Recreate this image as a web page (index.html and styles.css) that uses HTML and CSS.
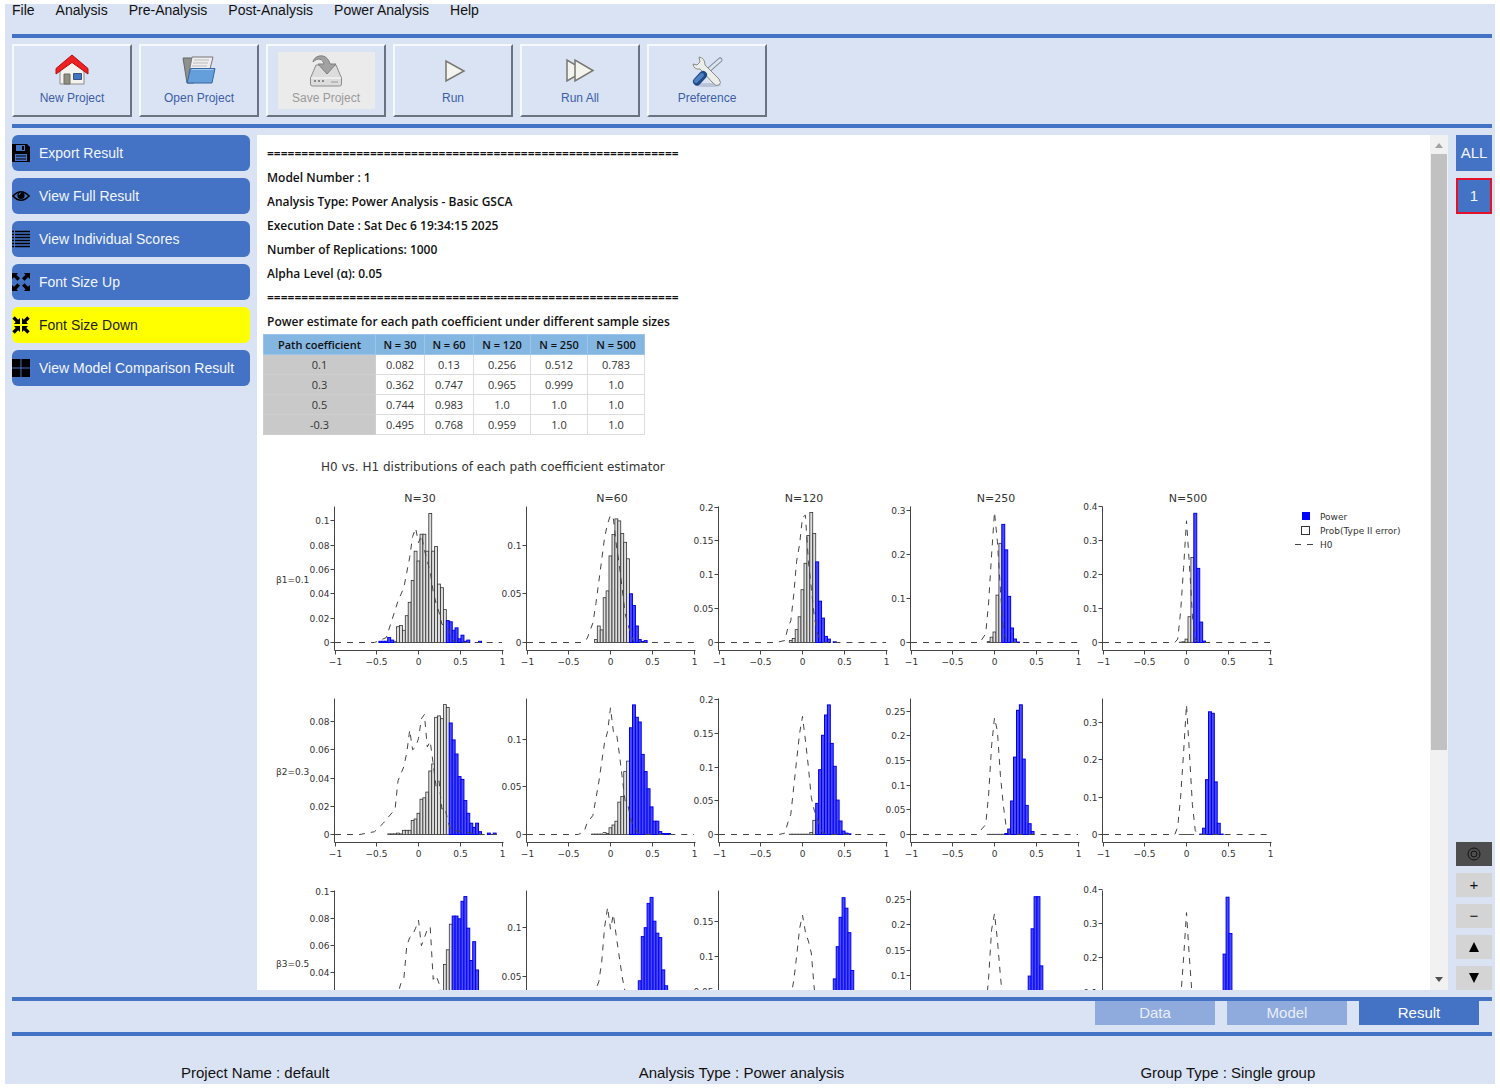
FILE: index.html
```html
<!DOCTYPE html>
<html lang="en">
<head>
<meta charset="utf-8">
<title>Power Analysis - Result</title>
<link rel="stylesheet" href="styles.css">
</head>
<body>
<div class="app">
  <nav class="menu">
    <a href="#">File</a><a href="#">Analysis</a><a href="#">Pre-Analysis</a><a href="#">Post-Analysis</a><a href="#">Power Analysis</a><a href="#">Help</a>
  </nav>

  <div class="toolbar">
    <button class="tool" type="button">
      <svg width="34" height="34" viewBox="0 0 34 34"><path d="M5 17v13h24V17L17 6z" fill="#f4f3ef" stroke="#8b8b86"/><path d="M9 20h6v10H9z" fill="#8f8f82" stroke="#6d6d62"/><path d="M18.500 19.500h8v6h-8z" fill="#3f76c4" stroke="#3a5078"/><path d="M17 1 1 14.500V20L17 8.500 33 20v-5.500z" fill="#e22" stroke="#b01010"/></svg>
      New Project
    </button>
    <button class="tool" type="button">
      <svg width="34" height="34" viewBox="0 0 34 34"><path d="M1 4h10l1 2v23H5z" fill="#8f918d" stroke="#666"/><path d="M10 3h21l-4 16H7z" fill="#eee" stroke="#777"/><path d="M12 6h15M11 9h15M10 12h15" stroke="#bbb" fill="none"/><path d="M8.500 14.500h24.500l-3 14.500H5z" fill="#659fdb" stroke="#3465a4"/><path d="M9.500 15.500h22" stroke="#a5caf0"/></svg>
      Open Project
    </button>
    <button class="tool" type="button" disabled>
      <span class="tool-face">
        <svg width="34" height="34" viewBox="0 0 34 34"><path d="M7 11h20l5.500 13v6q0 2-2 2h-27q-2 0-2-2v-6z" fill="#dcdcdc" stroke="#8c8c8c"/><path d="M2 24h30" stroke="#fff"/><path d="M5 27h2m2 0h2m2 0h2" stroke="#888" stroke-width="2"/><path d="M22 28h7" stroke="#999"/><path d="M4 8C5 1 18-2 21 10h6l-9 10-9-10h6C14 5 9 3 4 8z" fill="#a2a2a2" stroke="#7f7f7f"/></svg>
        Save Project
      </span>
    </button>
    <button class="tool" type="button">
      <svg width="34" height="34" viewBox="0 0 34 34"><path d="M10 7v20l18-10z" fill="#f4f4ef" stroke="#77776f" stroke-width="1.500"/></svg>
      Run
    </button>
    <button class="tool" type="button">
      <svg width="34" height="34" viewBox="0 0 34 34"><path d="M4 6v21l18-10.500z" fill="#f4f4ef" stroke="#77776f" stroke-width="1.500"/><path d="M12 6v21l18-10.500z" fill="#f4f4ef" stroke="#77776f" stroke-width="1.500"/></svg>
      Run All
    </button>
    <button class="tool" type="button">
      <svg width="34" height="34" viewBox="0 0 34 34"><ellipse cx="18" cy="31" rx="13" ry="2" fill="#b9c3d6"/><path d="M30 6 13 21" stroke="#7f8d9c" stroke-width="5" stroke-linecap="round"/><path d="M30 6 13 21" stroke="#dde5ee" stroke-width="3" stroke-linecap="round"/><path d="M9 3q6 1 6 8l14 14q3 4 0 6-3 2-6-2L10 15q-6 1-7-5l4 1 3-3z" fill="#eceeea" stroke="#8a8a85"/><path d="M13 21 7 27.500" stroke="#204a87" stroke-width="8" stroke-linecap="round"/><path d="M12 21 6 27" stroke="#4c80c0" stroke-width="4" stroke-linecap="round"/></svg>
      Preference
    </button>
  </div>

  <main class="workspace">
    <div class="actions">
      <button class="action" type="button"><svg class="action-icon" viewBox="0 0 18 18"><path fill-rule="evenodd" d="M0 0h15l3 3v15H0zM4 1v6h9V1zM3 10v7h12v-7zM10 2h2v4h-2z"/><path d="M4 11.500h10v1H4zm0 3h10v1H4z"/></svg>Export Result</button>
      <button class="action" type="button"><svg class="action-icon" viewBox="0 0 18 18"><path d="M1 9q8-8.500 16 0-8 8.500-16 0z" fill="none" stroke="#000" stroke-width="1.700"/><circle cx="9" cy="8.500" r="3.600"/><path d="M7 8q0-2 2-2" stroke="#4472c4" fill="none"/></svg>View Full Result</button>
      <button class="action" type="button"><svg class="action-icon" viewBox="0 0 18 18"><path d="M0 1.500h2m1 0h15M0 4.500h2m1 0h15M0 7.500h2m1 0h15M0 10.500h2m1 0h15M0 13.500h2m1 0h15M0 16.500h2m1 0h15" stroke="#000" stroke-width="1.400"/></svg>View Individual Scores</button>
      <button class="action" type="button"><svg class="action-icon" viewBox="0 0 18 18"><path d="M0 0h6L4.500 1.800 8 5.200 5.500 7.800 2 4.300 0 6zM18 0v6l-2-1.700-3.500 3.500L10 5.200l3.500-3.400L12 0zM0 18v-6l2 1.700 3.500-3.500L8 12.800l-3.500 3.400L6 18zM18 18h-6l1.500-1.800-3.500-3.400 2.500-2.600 3.500 3.500 2-1.700z"/></svg>Font Size Up</button>
      <button class="action is-current" type="button"><svg class="action-icon" viewBox="0 0 18 18"><path d="M8 8H2l1.700-1.900L.3 2.700 2.700.3l3.400 3.400L8 2zM10 8V2l1.900 1.700L15.300.3l2.400 2.400-3.400 3.400L16 8zM8 10v6l-1.900-1.700-3.400 3.400-2.400-2.400 3.400-3.400L2 10zM10 10h6l-1.700 1.900 3.400 3.400-2.400 2.400-3.400-3.400L10 16z"/></svg>Font Size Down</button>
      <button class="action" type="button"><svg class="action-icon" viewBox="0 0 18 18"><path d="M0 0h8.500v8.500H0zM9.500 0H18v8.500H9.500zM0 9.500h8.500V18H0zM9.500 9.500H18V18H9.500z"/></svg>View Model Comparison Result</button>
    </div>

    <section class="report-frame">
      <div class="report">
        <p>============================================================</p>
        <p>Model Number : 1</p>
        <p>Analysis Type: Power Analysis - Basic GSCA</p>
        <p>Execution Date : Sat Dec 6 19:34:15 2025</p>
        <p>Number of Replications: 1000</p>
        <p>Alpha Level (α): 0.05</p>
        <p>============================================================</p>
        <p>Power estimate for each path coefficient under different sample sizes</p>
        <table class="power">
          <colgroup><col class="col-path"><col class="col-s"><col class="col-s"><col class="col-l"><col class="col-l"><col class="col-l"></colgroup>
          <thead><tr><th>Path coefficient</th><th>N = 30</th><th>N = 60</th><th>N = 120</th><th>N = 250</th><th>N = 500</th></tr></thead>
          <tbody>
            <tr><th>0.1</th><td>0.082</td><td>0.13</td><td>0.256</td><td>0.512</td><td>0.783</td></tr>
            <tr><th>0.3</th><td>0.362</td><td>0.747</td><td>0.965</td><td>0.999</td><td>1.0</td></tr>
            <tr><th>0.5</th><td>0.744</td><td>0.983</td><td>1.0</td><td>1.0</td><td>1.0</td></tr>
            <tr><th>-0.3</th><td>0.495</td><td>0.768</td><td>0.959</td><td>1.0</td><td>1.0</td></tr>
          </tbody>
        </table>
        <svg id="chart" class="chart" width="1160" height="810" viewBox="0 0 1160 810"></svg>
      </div>
      <div class="scroll" aria-hidden="true">
        <span class="scroll-up"></span>
        <span class="scroll-track"><span class="scroll-thumb"></span></span>
        <span class="scroll-down"></span>
      </div>
    </section>

    <div class="rail">
      <div class="rail-models">
        <button class="model" type="button">ALL</button>
        <button class="model is-selected" type="button">1</button>
      </div>
      <div class="rail-view">
        <button class="view is-dark" type="button" aria-label="Center"><svg width="14" height="14" viewBox="0 0 14 14" fill="none" stroke="#111"><circle cx="7" cy="7" r="6"/><circle cx="7" cy="7" r="3"/></svg></button>
        <button class="view" type="button">+</button>
        <button class="view" type="button">−</button>
        <button class="view" type="button" aria-label="Up"><svg width="12" height="12" viewBox="0 0 12 12"><path d="M6 1l5 10H1z"/></svg></button>
        <button class="view" type="button" aria-label="Down"><svg width="12" height="12" viewBox="0 0 12 12"><path d="M6 11l5-10H1z"/></svg></button>
      </div>
    </div>
  </main>

  <div class="tabs">
    <button class="tab" type="button">Data</button>
    <button class="tab" type="button">Model</button>
    <button class="tab is-open" type="button">Result</button>
  </div>

  <footer class="status">
    <span>Project Name : default</span><span>Analysis Type : Power analysis</span><span>Group Type : Single group</span>
  </footer>
</div>
<script src="chart.js"></script>
</body>
</html>
```

FILE: styles.css
```css
* { box-sizing: border-box; }

body {
  margin: 0;
  padding: 4px 5px 5px;
  background: #fff;
  color: #111;
  font: 15px/18px "Liberation Sans", Arial, sans-serif;
}

button {
  margin: 0;
  padding: 0;
  border: 0;
  font: inherit;
  color: inherit;
}

.app {
  display: flex;
  flex-direction: column;
  height: calc(100vh - 9px);
  min-height: 600px;
  padding: 0 3px 0 7px;
  background: #dae3f3;
}

.menu {
  display: flex;
  flex: none;
  gap: 21px;
  height: 30px;
  font-size: 14px;
  line-height: 12px;
}

.menu a { color: #111; text-decoration: none; }

.toolbar {
  display: grid;
  grid-template-columns: repeat(6, 120px);
  flex: none;
  gap: 7px;
  padding: 6px 0 7px;
  border-top: 4px solid #4472c4;
  border-bottom: 4px solid #4472c4;
}

.tool {
  display: flex;
  flex-direction: column;
  align-items: center;
  justify-content: center;
  height: 73px;
  border: 2px solid;
  border-color: #f5f8fd #6b7380 #6b7380 #f5f8fd;
  background: #dae3f3;
  color: #3a5ea8;
  font-size: 12px;
  line-height: 20px;
}

.tool-face {
  display: flex;
  flex-direction: column;
  align-items: center;
  width: 97px;
  padding: 2px 0 1px;
  background: #ebebeb;
  color: #9a9a9a;
}

.workspace {
  display: flex;
  flex: 1;
  gap: 7px;
  min-height: 0;
  padding: 7px 0;
}

.actions {
  display: flex;
  flex: none;
  flex-direction: column;
  gap: 7px;
  width: 238px;
}

.action {
  display: flex;
  align-items: center;
  gap: 9px;
  height: 36px;
  border-radius: 6px;
  background: #4472c4;
  color: #f2f6ff;
  font-size: 14px;
  white-space: nowrap;
}

.action.is-current { background: #ff0; color: #222; }

.action-icon { flex: none; width: 18px; height: 18px; }

.report-frame {
  display: flex;
  flex: 1;
  min-width: 0;
  background: #fff;
}

.report {
  flex: 1;
  min-width: 0;
  padding: 7px 0 0 6px;
  overflow: auto;
  scrollbar-width: none;
  color: #111;
  font-family: "Open Sans", "Noto Sans", sans-serif;
  font-size: 12px;
  font-weight: 600;
}

.report p { margin: 0; padding-left: 4px; line-height: 24px; white-space: nowrap; }

.power {
  width: 381px;
  border-collapse: collapse;
  table-layout: fixed;
  font-size: 11px;
  line-height: 19px;
  text-align: center;
}

.col-path { width: 112px; }
.col-s { width: 49px; }
.col-l { width: 57px; }

.power th, .power td { padding: 0; border: 1px solid #ddd; font-weight: 400; color: #333; }
.power thead th { background: #84b6e2; border-color: #9cc5ea; color: #111; font-weight: 600; }
.power tbody th { background: #c9c9c9; border-color: #cfcfcf; }

.chart { display: block; font-family: "DejaVu Sans", Verdana, sans-serif; font-weight: 400; }
.chart text { fill: #333; font-size: 9px; }
.chart .chart-title { font-size: 12px; }
.chart .plot-title { font-size: 11px; }
.end { text-anchor: end; }
.mid { text-anchor: middle; }
.axis { fill: none; stroke: #444; }
.miss { fill: #ddd; stroke: #333; stroke-width: 0.8px; }
.miss-key { fill: #fff; stroke: #333; }
.power-bar { fill: #4a4aff; stroke: #00e; stroke-width: 1px; }
.power-key { fill: #00f; }
.null { fill: none; stroke: #444; stroke-dasharray: 6 6; }

.scroll {
  display: flex;
  flex: none;
  flex-direction: column;
  align-items: center;
  width: 18px;
  padding: 8px 0;
  background: #f1f1f1;
}

.scroll-up, .scroll-down { border: 4px solid transparent; }
.scroll-up { border-top: 0; border-bottom: 5px solid #a3a3a3; }
.scroll-down { border-bottom: 0; border-top: 5px solid #505050; }
.scroll-track { flex: 1; width: 16px; padding: 6px 0; }
.scroll-thumb { display: block; height: 73%; background: #c1c1c1; }

.rail {
  display: flex;
  flex: none;
  flex-direction: column;
  justify-content: space-between;
  width: 37px;
  padding-left: 1px;
}

.rail-models, .rail-view { display: grid; gap: 7px; }

.model { height: 36px; background: #4472c4; color: #f2f6ff; }
.model.is-selected { border: 2px solid #e3122b; }

.view {
  display: flex;
  align-items: center;
  justify-content: center;
  height: 24px;
  background: #d4d4d4;
}

.view.is-dark { background: #4d4d4d; }

.tabs {
  display: flex;
  flex: none;
  justify-content: flex-end;
  gap: 12px;
  height: 39px;
  padding: 0 13px 7px;
  border-top: 4px solid #4472c4;
  border-bottom: 4px solid #4472c4;
}

.tab { width: 120px; background: #8faadc; color: #e8effb; }
.tab.is-open { background: #4472c4; color: #fff; }

.status {
  display: grid;
  grid-template-columns: repeat(3, 1fr);
  flex: none;
  height: 48px;
  padding: 28px 21px 0 0;
  text-align: center;
}
```

FILE: chart.js
```js
// Histogram grid: every bin is 0.035 wide and bin k is centred on 0.035 * k.
// miss = share of Type II errors, hit = power, both as [first bin, ...heights];
// h0 = [bin, height] pairs of the null distribution; unit = pixels per 1.0.
const BIN = 2.93;
const COL = 192;
const ROW = 192;
const f = 0.0004;

const plots = [
  [
    { unit: 1217, ticks: [0, 0.02, 0.04, 0.06, 0.08, 0.1],
      miss: [[-8, .001, .013, .014, .010, .022, .033, .051, .075, .067, .089, .089, .075, .106, .075, .079, .048, .045, .027]],
      hit: [[-13, .001, .001, .001, .004, .002], [10, .018, .017, .010, .012, .003, .006, .001, .002], [21, .001]],
      h0: [[-15, 0], [-11, .004], [-7, .034], [-5, .045], [-3, .07], [-2, .087], [-1, .094], [0, .082], [1, .088], [2, .076], [4, .058], [5, .042], [6, .032], [7, .025], [8, .015], [10, .013], [11, .003], [13, 0]] },
    { unit: 973, ticks: [0, 0.05, 0.1],
      miss: [[-5, .003, .017, .013, .046, .053, .089, .111, .127, .125, .112, .103, .086]],
      hit: [[7, .050, .038, .017, .003, .001, .002]],
      h0: [[-10, 0], [-8, .004], [-6, .02], [-5, .04], [-3, .085], [-2, .108], [-1, .122], [0, .131], [1, .127], [2, .1], [3, .08], [4, .055], [5, .03], [6, .018], [7, .008], [8, 0]] },
    { unit: 677, ticks: [0, 0.05, 0.1, 0.15, 0.2],
      miss: [[-4, .003, .006, .019, .038, .078, .117, .158, .192, .161]],
      hit: [[5, .119, .061, .036, .009, .005], [11, .001]],
      h0: [[-9, 0], [-6, .003], [-5, .022], [-4, .032], [-3, .07], [-2, .12], [-1, .145], [0, .185], [1, .188], [2, .12], [3, .08], [4, .04], [5, .015], [6, .003], [7, 0]] },
    { unit: 439, ticks: [0, 0.1, 0.2, 0.3],
      miss: [[-2, .002, .012, .024, .108, .226]],
      hit: [[3, .269, .211, .105, .033, .008, .001]],
      h0: [[-5, 0], [-3, .02], [-2, .09], [-1, .2], [0, .297], [1, .23], [2, .12], [3, .03], [4, .005], [5, 0]] },
    { unit: 340, ticks: [0, 0.1, 0.2, 0.3, 0.4],
      miss: [[-2, .001, .002, .01, .076, .25]],
      hit: [[3, .38, .218, .06, .004]],
      h0: [[-4, 0], [-3, .01], [-2, .09], [-1, .22], [0, .358], [1, .23], [2, .08], [3, .01], [4, 0]] },
  ],
  [
    { unit: 1412, ticks: [0, 0.02, 0.04, 0.06, 0.08],
      miss: [[-10, f, f, f, .001, f, .003, .003, .003, .010, .011, .015, .025, .026, .030, .045, .050, .083, .084, .082, .092, .090]],
      hit: [[11, .079, .067, .057, .041, .039, .024, .015, .008, .005, .008, .002], [24, .001], [26, .001]],
      h0: [[-20, 0], [-15, .002], [-12, .008], [-10, .013], [-8, .018], [-7, .038], [-5, .048], [-4, .058], [-3, .074], [-2, .06], [-1, .062], [0, .068], [1, .082], [2, .085], [3, .062], [4, .066], [5, .05], [6, .034], [7, .038], [8, .018], [9, .019], [10, .01], [11, .003], [16, .002], [20, 0]] },
    { unit: 953, ticks: [0, 0.05, 0.1],
      miss: [[-6, f, f, f, f, .002, .001, .007, .010, .014, .034, .040, .066, .077]],
      hit: [[7, .112, .136, .123, .118, .084, .066, .048, .029, .014, .014, .003, .001, .001, .001]],
      h0: [[-11, 0], [-9, .003], [-8, .012], [-6, .02], [-4, .055], [-2, .097], [-1, .108], [0, .133], [1, .108], [2, .107], [3, .085], [4, .06], [5, .035], [6, .03], [7, .015], [9, .003], [11, 0]] },
    { unit: 675, ticks: [0, 0.05, 0.1, 0.15, 0.2],
      miss: [[-4, f, f, f, f, f, f, f, .003, .021]],
      hit: [[5, .046, .096, .147, .177, .192, .135, .101, .051, .020, .005, .002, .001]],
      h0: [[-8, 0], [-6, .002], [-5, .018], [-4, .03], [-3, .07], [-2, .11], [-1, .15], [0, .175], [1, .14], [2, .1], [3, .055], [4, .036], [5, .025], [6, .01], [7, .002], [9, 0]] },
    { unit: 493, ticks: [0, 0.05, 0.1, 0.15, 0.2, 0.25],
      miss: [[-2, f, f, f, f, f, f]],
      hit: [[4, .002, .011, .068, .157, .252, .263, .153, .059, .022, .006]],
      h0: [[-6, 0], [-3, .02], [-2, .08], [-1, .18], [0, .237], [1, .21], [2, .12], [3, .06], [4, .015], [5, 0]] },
    { unit: 373, ticks: [0, 0.1, 0.2, 0.3],
      miss: [[-2, f, f, f, f, f]],
      hit: [[5, .001, .017, .147, .329, .325, .141, .03, .001]],
      h0: [[-4, 0], [-3, .02], [-2, .1], [-1, .22], [0, .348], [1, .22], [2, .08], [3, .01], [4, 0]] },
  ],
  [
    { unit: 1346, ticks: [0, 0.02, 0.04, 0.06, 0.08, 0.1],
      miss: [[5, .008, .012, .018, .024, .046, .057, .076]],
      hit: [[12, .082, .082, .080, .093, .0965, .073, .049, .063, .042, .02, .01]],
      h0: [[-9, .01], [-6, .032], [-5, .035], [-4, .06], [-3, .066], [-2, .068], [-1, .073], [0, .079], [1, .06], [2, .066], [3, .072], [4, .074], [5, .035], [6, .038], [7, .032], [8, .02]] },
    { unit: 993, ticks: [0, 0.05, 0.1],
      miss: [[6, .005, .01, .015, .02]],
      hit: [[10, .046, .0905, .0995, .124, .130, .106, .094, .0895, .057, .041, .02]],
      h0: [[-6, .03], [-4, .045], [-3, .065], [-2, .1], [-1, .12], [0, .098], [1, .113], [2, .09], [3, .07], [4, .05], [5, .035], [7, 0]] },
    { unit: 700, ticks: [0, 0.05, 0.1, 0.15],
      miss: [], hit: [[10, .02, .068, .114, .156, .184, .169, .134, .080, .04]],
      h0: [[-5, .02], [-3, .065], [-2, .1], [-1, .14], [0, .159], [1, .135], [2, .122], [3, .105], [4, .055], [5, .03]] },
    { unit: 509, ticks: [0, 0.05, 0.1, 0.15, 0.2, 0.25],
      miss: [], hit: [[11, .03, .099, .192, .255, .255, .119, .04]],
      h0: [[-3, .03], [-2, .095], [-1, .19], [0, .222], [1, .17], [2, .1], [3, .04]] },
    { unit: 343, ticks: [0, 0.1, 0.2, 0.3, 0.4],
      miss: [], hit: [[12, .05, .211, .377, .271, .08]],
      h0: [[-3, .02], [-2, .08], [-1, .2], [0, .332], [1, .2], [2, .08], [3, .02]] },
  ],
];

const out = [];
const text = (x, y, s, cls = "") => out.push(`<text x="${x}" y="${y}" class="${cls}">${s}</text>`);

text(58, 36, "H0 vs. H1 distributions of each path coefficient estimator", "chart-title");
["N=30", "N=60", "N=120", "N=250", "N=500"].forEach((s, i) => text(157 + i * COL, 67, s, "plot-title mid"));
["β1=0.1", "β2=0.3", "β3=0.5"].forEach((s, i) => text(13, 148 + i * ROW, s));

plots.forEach((row, r) => row.forEach((p, c) => {
  const left = 71.5 + c * COL;
  const mid = left + 84;
  const zero = 207.5 + r * ROW;
  const bars = (list, cls) => list.forEach(([k0, ...hs]) => hs.forEach((h, i) => {
    const x = mid + (k0 + i - 0.5) * BIN;
    out.push(`<rect x="${x.toFixed(1)}" y="${(zero - h * p.unit).toFixed(1)}" width="${BIN}" height="${(h * p.unit).toFixed(1)}" class="${cls}"/>`);
  }));
  bars(p.miss, "miss");
  bars(p.hit, "power-bar");
  const pts = [[-28.5, 0], ...p.h0, [28.5, 0]].map(([k, v]) => `${(mid + k * BIN).toFixed(1)},${(zero - v * p.unit).toFixed(1)}`);
  out.push(`<polyline class="null" points="${pts.join(" ")}"/>`);
  out.push(`<path class="axis" d="M${left} ${zero - 136}V${zero + 8}H${left + 169}"/>`);
  p.ticks.forEach((t) => {
    const y = Math.round(zero - t * p.unit - 0.5) + 0.5;
    out.push(`<path class="axis" d="M${left - 4} ${y}h4"/>`);
    text(left - 5, y + 3, String(t), "end");
  });
  [-1, -0.5, 0, 0.5, 1].forEach((t) => {
    const x = Math.floor(mid + t * 83.5) + 0.5;
    out.push(`<path class="axis" d="M${x} ${zero + 8}v4"/>`);
    text(x, zero + 22, String(t).replace("-", "−"), "mid");
  });
}));

// Legend
out.push('<rect class="power-key" x="1039" y="77" width="8" height="8"/>');
out.push('<rect class="miss-key" x="1038.500" y="91.500" width="8" height="8"/>');
out.push('<path class="null" d="M1032 109.500h20"/>');
text(1057, 85, "Power");
text(1057, 99, "Prob(Type II error)");
text(1057, 113, "H0");

document.getElementById("chart").innerHTML = out.join("");
```
